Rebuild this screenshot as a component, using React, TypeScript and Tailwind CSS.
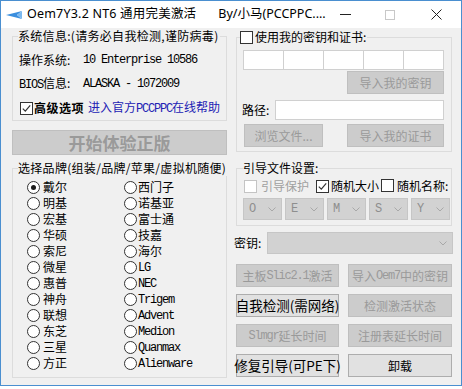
import React from "react";
import clsx from "clsx";

const mono =
  "font-['Liberation_Mono','Noto_Sans_CJK_SC',monospace] text-[12px] tracking-[-1.2px]";

function M({ children }: { children: React.ReactNode }) {
  return <span className={mono}>{children}</span>;
}

function Check({ checked, disabled }: { checked?: boolean; disabled?: boolean }) {
  return (
    <span
      className={clsx(
        "inline-flex h-[13px] w-[13px] shrink-0 items-center justify-center border bg-white",
        disabled ? "border-[#c4c4c4]" : "border-[#333]"
      )}
    >
      {checked && (
        <svg viewBox="0 0 11 11" className="h-[11px] w-[11px]">
          <path d="M1.8 5.6 L4.3 8.1 L9.2 2.4" fill="none" stroke="#333" strokeWidth="1.2" />
        </svg>
      )}
    </span>
  );
}

function Radio({ label, checked, gap }: { label: React.ReactNode; checked?: boolean; gap: string }) {
  return (
    <div className="flex h-[16px] items-center">
      <span className="flex h-[13px] w-[13px] shrink-0 items-center justify-center rounded-full border border-[#333] bg-white">
        {checked && <span className="h-[5px] w-[5px] rounded-full bg-[#1a1a1a]" />}
      </span>
      <span className={gap}>{label}</span>
    </div>
  );
}

function Group({
  className,
  label,
  labelLeft,
  children,
}: {
  className: string;
  label: React.ReactNode;
  labelLeft: string;
  children?: React.ReactNode;
}) {
  return (
    <div className={clsx("relative border border-[#dcdcdc]", className)}>
      <div className={clsx("absolute -top-[9px] flex h-[16px] items-center bg-[#f0f0f0] pr-[1px]", labelLeft)}>
        {label}
      </div>
      {children}
    </div>
  );
}

function Btn({
  children,
  disabled,
  className,
}: {
  children: React.ReactNode;
  disabled?: boolean;
  className: string;
}) {
  return (
    <div
      className={clsx(
        "flex items-center justify-center whitespace-nowrap border",
        disabled
          ? "border-[#bfbfbf] bg-[#cccccc] text-[#9a9a9a]"
          : "border-[#adadad] bg-[#e1e1e1] text-black",
        className
      )}
    >
      {children}
    </div>
  );
}

function Chevron() {
  return (
    <svg viewBox="0 0 8 5" className="h-[5px] w-[8px]">
      <path d="M0.5 0.5 L4 4 L7.5 0.5" fill="none" stroke="#a8a8a8" strokeWidth="1" />
    </svg>
  );
}

function Combo({ letter }: { letter: string }) {
  return (
    <div className="flex h-[22px] w-[39px] items-center justify-between border border-[#c6c6c6] bg-[#d2d2d2] pl-[5px] pr-[5px]">
      <span className={clsx(mono, "text-[#8e8e8e]")}>{letter}</span>
      <Chevron />
    </div>
  );
}

const left = ["戴尔", "明基", "宏基", "华硕", "索尼", "微星", "惠普", "神舟", "联想", "东芝", "三星", "方正"];
const right: React.ReactNode[] = [
  "西门子",
  "诺基亚",
  "富士通",
  "技嘉",
  "海尔",
  <M key="lg">LG</M>,
  <M key="nec">NEC</M>,
  <M key="t">Trigem</M>,
  <M key="a">Advent</M>,
  <M key="m">Medion</M>,
  <M key="q">Quanmax</M>,
  <M key="al">Alienware</M>,
];

export default function App() {
  return (
    <div className="h-[389px] w-[462px] bg-white font-['Noto_Sans_CJK_SC',sans-serif] text-[12px] leading-none text-black">
      <div className="flex h-[386px] w-[462px] flex-col border border-[#4a8fd0]">
        {/* title bar */}
        <div className="flex h-[27px] shrink-0 items-center bg-white">
          <svg viewBox="0 0 16 8" className="ml-[5px] h-[8px] w-[16px]">
            <path d="M0 4 L16 0 L11 4 L16 8 Z" fill="#3a8ede" />
            <path d="M11 4 L16 0 L16 8 Z" fill="#7ab8ef" />
          </svg>
          <span className="ml-[5px] font-['Noto_Sans','Noto_Sans_CJK_SC',sans-serif] text-[12.5px] tracking-[0.2px]">
            Oem7Y3.2 NT6 通用完美激活
          </span>
          <span className="ml-[22px] font-['Noto_Sans','Noto_Sans_CJK_SC',sans-serif] text-[12.5px]">
            By/小马(PCCPPC....
          </span>
          <div className="ml-auto flex items-center">
            <span className="mr-[34px] h-px w-[11px] bg-[#222]" />
            <span className="mr-[36px] h-[10px] w-[10px] border border-[#c8c8c8]" />
            <svg viewBox="0 0 11 11" className="mr-[19px] h-[11px] w-[11px]">
              <path d="M0.5 0.5 L10.5 10.5 M10.5 0.5 L0.5 10.5" stroke="#222" strokeWidth="1" />
            </svg>
          </div>
        </div>

        {/* client */}
        <div className="flex flex-1 bg-[#f0f0f0]">
          {/* left column */}
          <div className="ml-[11px] flex w-[215px] flex-col">
            <Group
              className="mt-[8px] h-[85px] pl-[6px] pt-[11px]"
              labelLeft="left-[5px]"
              label={<span className="tracking-[0.3px]">系统信息:(请务必自我检测,谨防病毒)</span>}
            >
              <div className="flex h-[24px] items-center">
                <span className="w-[64px]">操作系统:</span>
                <M>10 Enterprise 10586</M>
              </div>
              <div className="flex h-[24px] items-center">
                <span className="w-[64px]">
                  <M>BIOS</M>信息:
                </span>
                <M>ALASKA - 1072009</M>
              </div>
              <div className="flex h-[24px] items-center">
                <span className="ml-[1px]">
                  <Check checked />
                </span>
                <span className="ml-[1px] font-bold tracking-[0.5px]">高级选项</span>
                <span className="ml-[4px] text-[#2222b4]">
                  进入官方<M>PCCPPC</M>在线帮助
                </span>
              </div>
            </Group>

            <Btn disabled className="mt-[9px] h-[25px] text-[17px] font-bold text-[#8a8a8a]">
              开始体验正版
            </Btn>

            <Group
              className="mt-[13px] h-[210px] pl-[14px] pt-[10px]"
              labelLeft="left-[5px]"
              label={
                <span className="whitespace-nowrap tracking-[0.3px]">选择品牌(组装/品牌/苹果/虚拟机随便)</span>
              }
            >
              <div className="flex">
                <div className="w-[97px]">
                  {left.map((l, i) => (
                    <Radio key={i} label={l} checked={i === 0} gap="ml-[3px]" />
                  ))}
                </div>
                <div>
                  {right.map((l, i) => (
                    <Radio key={i} label={l} gap="ml-[1px]" />
                  ))}
                </div>
              </div>
            </Group>
          </div>

          {/* right column */}
          <div className="ml-[9px] flex w-[216px] flex-col">
            <Group
              className="mt-[9px] h-[115px] pl-[6px] pt-[12px]"
              labelLeft="left-[3px]"
              label={
                <>
                  <Check />
                  <span className="ml-[2px]">使用我的密钥和证书:</span>
                </>
              }
            >
              <div className="flex h-[20px] w-[201px] border border-[#d0d0d0] bg-white">
                <div className="flex-1" />
                <div className="flex-1 border-l border-[#d0d0d0]" />
                <div className="flex-1 border-l border-[#d0d0d0]" />
                <div className="flex-1 border-l border-[#d0d0d0]" />
                <div className="flex-1 border-l border-[#d0d0d0]" />
              </div>
              <div className="mt-[1px] flex w-[201px] justify-end">
                <Btn disabled className="h-[23px] w-[97px]">
                  导入我的密钥
                </Btn>
              </div>
              <div className="mt-[6px] flex h-[20px] w-[201px] items-center">
                <span className="-ml-[1px]">路径:</span>
                <div className="ml-auto h-[20px] w-[169px] border border-[#d0d0d0] bg-white" />
              </div>
              <div className="mt-[4px] flex w-[201px] justify-between">
                <Btn disabled className="ml-[1px] h-[23px] w-[79px]">
                  浏览文件...
                </Btn>
                <Btn disabled className="h-[23px] w-[97px]">
                  导入我的证书
                </Btn>
              </div>
            </Group>

            <Group
              className="mt-[16px] h-[58px] pl-[7px] pt-[9px]"
              labelLeft="left-[6px]"
              label={<span>引导文件设置:</span>}
            >
              <div className="flex h-[16px] items-center">
                <Check disabled />
                <span className="ml-[4px] text-[#a0a0a0]">引导保护</span>
                <span className="ml-[7px]">
                  <Check checked />
                </span>
                <span className="ml-[2px]">随机大小</span>
                <span className="ml-[2px]">
                  <Check />
                </span>
                <span className="ml-[3px]">随机名称:</span>
              </div>
              <div className="-ml-[1px] mt-[4px] flex gap-[3px]">
                <Combo letter="O" />
                <Combo letter="E" />
                <Combo letter="M" />
                <Combo letter="S" />
                <Combo letter="Y" />
              </div>
            </Group>

            <div className="-ml-[2px] mt-[6px] flex h-[22px] items-center">
              <span>密钥:</span>
              <div className="ml-auto mr-[-1px] flex h-[22px] w-[186px] items-center justify-end border border-[#c6c6c6] bg-[#d2d2d2] pr-[5px]">
                <Chevron />
              </div>
            </div>

            <div className="mt-[10px] flex flex-col gap-[7px]">
              <div className="flex justify-between">
                <Btn disabled className="h-[23px] w-[103px]">
                  主板<M>Slic2.1</M>激活
                </Btn>
                <Btn disabled className="h-[23px] w-[104px]">
                  导入<M>Oem7</M>中的密钥
                </Btn>
              </div>
              <div className="flex justify-between">
                <Btn className="h-[23px] w-[103px] text-[13.5px]">自我检测(需网络)</Btn>
                <Btn disabled className="h-[23px] w-[104px]">
                  检测激活状态
                </Btn>
              </div>
              <div className="flex justify-between">
                <Btn disabled className="h-[23px] w-[103px]">
                  <M>Slmgr</M>延长时间
                </Btn>
                <Btn disabled className="h-[23px] w-[104px]">
                  注册表延长时间
                </Btn>
              </div>
              <div className="flex justify-between">
                <Btn className="h-[23px] w-[103px] text-[13.5px]">修复引导(可PE下)</Btn>
                <Btn className="h-[23px] w-[104px]">卸载</Btn>
              </div>
            </div>
          </div>
        </div>
      </div>
    </div>
  );
}
